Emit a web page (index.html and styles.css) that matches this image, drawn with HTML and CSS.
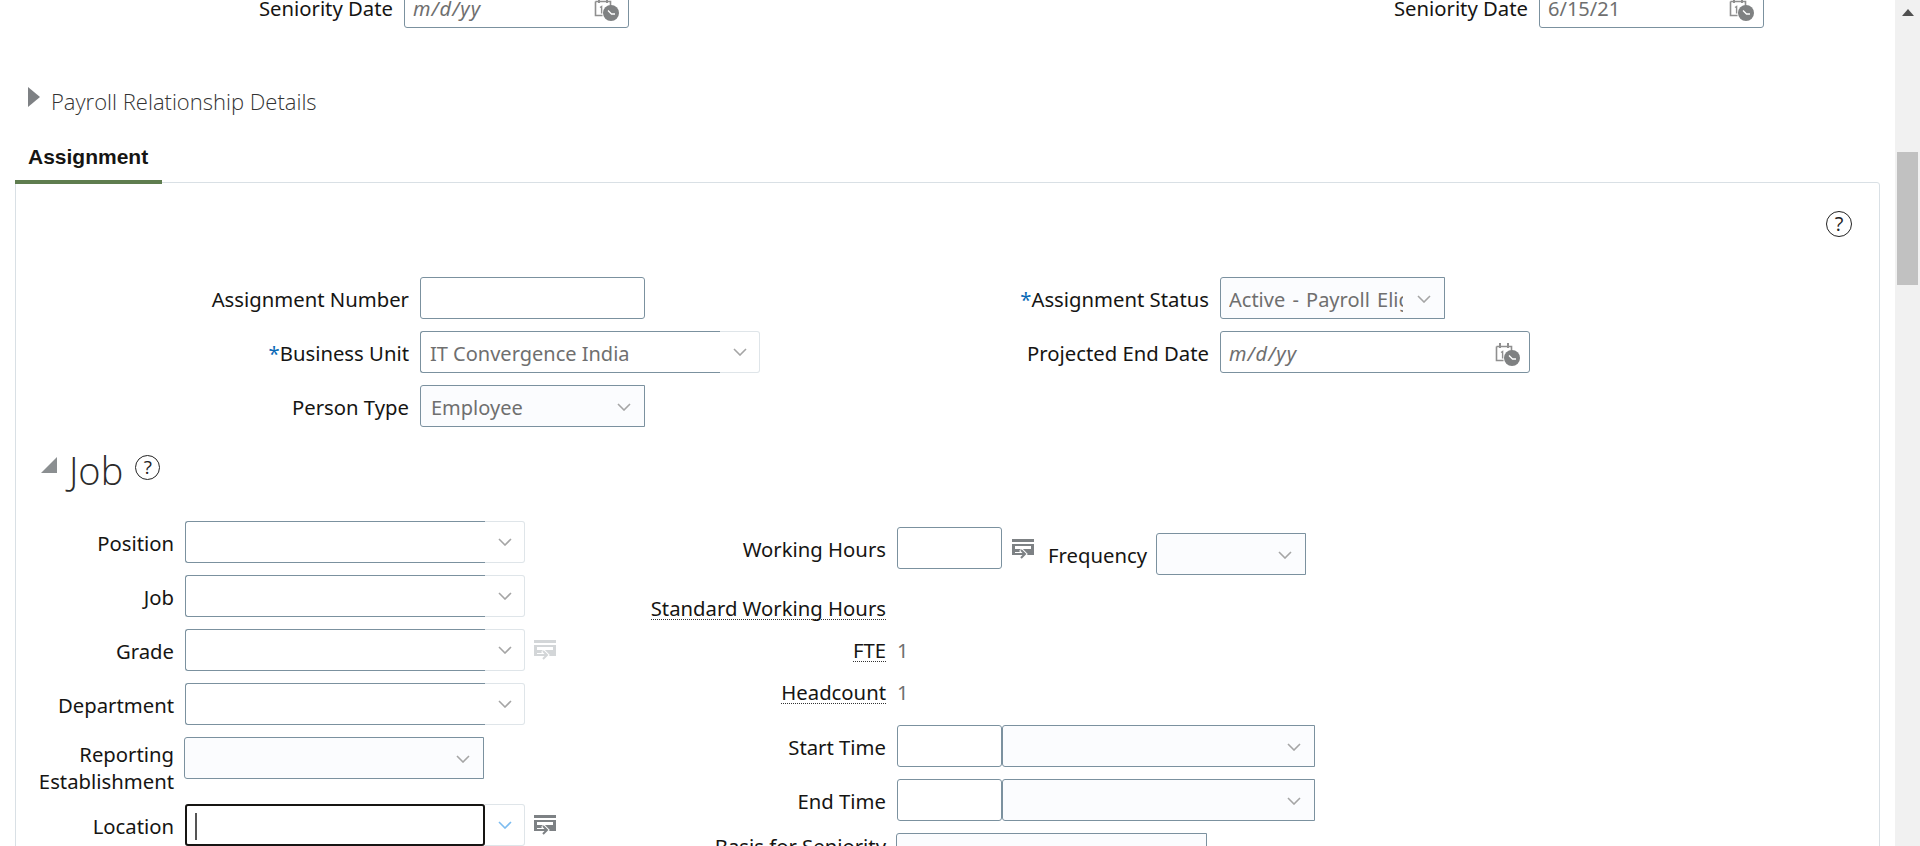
FILE: index.html
```html
<!DOCTYPE html>
<html lang="en">
<head>
<meta charset="utf-8">
<title>Assignment</title>
<link rel="stylesheet" href="styles.css">
</head>
<body>
<svg class="sprite" aria-hidden="true">
  <symbol id="chev" viewBox="0 0 14 8"><polyline points="1,1 7,7 13,1" fill="none" stroke="currentColor" stroke-width="1.6"/></symbol>
  <symbol id="cal" viewBox="0 0 25 24">
    <path d="M1.5 4.5h15v5M1.5 4.5v14h7" fill="none" stroke="#8f8f8f" stroke-width="1.6"/>
    <path d="M5 1v5M13 1v5" stroke="#8f8f8f" stroke-width="2"/>
    <path d="M6 10.5l1.6-1v7" fill="none" stroke="#8f8f8f" stroke-width="1.4"/>
    <circle cx="17" cy="16" r="8" fill="#7f8182"/>
    <path d="M14 13.5l3.5 3.5h3.5" fill="none" stroke="#fff" stroke-width="1.3"/>
  </symbol>
  <symbol id="detail" viewBox="0 0 22 20">
    <path fill-rule="evenodd" d="M0 0h22v3H0zM0 5h22v11H0zM3 7v3h16V7z" fill="currentColor"/>
    <path d="M3 15h10M8.5 10.5l4.5 4.5-4.5 4.5" fill="none" stroke="#fff" stroke-width="4"/>
    <path d="M3 15h10M9 11l4 4-4 4" fill="none" stroke="currentColor" stroke-width="2"/>
  </symbol>
</svg>

<div class="page">
  <main class="content">
    <div class="top-row">
      <span class="label">Seniority Date</span>
      <div class="input date italic"><span>m/d/yy</span><svg class="cal"><use href="#cal"/></svg></div>
      <span class="label">Seniority Date</span>
      <div class="input date"><span>6/15/21</span><svg class="cal"><use href="#cal"/></svg></div>
    </div>

    <div class="disclosure">
      <span class="tri-right"></span>
      <h2 class="disclosure-title">Payroll Relationship Details</h2>
    </div>

    <div class="tabs"><span class="tab">Assignment</span></div>

    <section class="panel">
      <div class="panel-tools"><span class="help">?</span></div>

      <div class="assign-grid">
        <div class="col">
          <div class="field">
            <span class="label lw-a">Assignment Number</span>
            <div class="input w225"></div>
          </div>
          <div class="field">
            <span class="label lw-a"><i class="req">*</i>Business Unit</span>
            <div class="combo"><div class="combo-main"><span>IT Convergence India</span></div><div class="combo-btn"><svg class="chev"><use href="#chev"/></svg></div></div>
          </div>
          <div class="field">
            <span class="label lw-a">Person Type</span>
            <div class="select w225"><span class="val">Employee</span><svg class="chev"><use href="#chev"/></svg></div>
          </div>
        </div>
        <div class="col">
          <div class="field">
            <span class="label lw-b"><i class="req">*</i>Assignment Status</span>
            <div class="select w225"><span class="val clip">Active - Payroll Eligible</span><svg class="chev"><use href="#chev"/></svg></div>
          </div>
          <div class="field">
            <span class="label lw-b">Projected End Date</span>
            <div class="input date italic w310"><span>m/d/yy</span><svg class="cal"><use href="#cal"/></svg></div>
          </div>
        </div>
      </div>

      <div class="job-head">
        <span class="tri-down"></span>
        <h2 class="job-title">Job</h2>
        <span class="help small">?</span>
      </div>

      <div class="job-grid">
        <div class="col">
          <div class="field"><span class="label lw-c">Position</span><div class="combo"><div class="combo-main"></div><div class="combo-btn"><svg class="chev"><use href="#chev"/></svg></div></div></div>
          <div class="field"><span class="label lw-c">Job</span><div class="combo"><div class="combo-main"></div><div class="combo-btn"><svg class="chev"><use href="#chev"/></svg></div></div></div>
          <div class="field"><span class="label lw-c">Grade</span><div class="combo"><div class="combo-main"></div><div class="combo-btn"><svg class="chev"><use href="#chev"/></svg></div></div><svg class="detail faint"><use href="#detail"/></svg></div>
          <div class="field"><span class="label lw-c">Department</span><div class="combo"><div class="combo-main"></div><div class="combo-btn"><svg class="chev"><use href="#chev"/></svg></div></div></div>
          <div class="field tall"><span class="label lw-c wrap">Reporting Establishment</span><div class="select w300"><span class="val"></span><svg class="chev"><use href="#chev"/></svg></div></div>
          <div class="field"><span class="label lw-c">Location</span><div class="combo focus"><div class="combo-main"><span class="caret"></span></div><div class="combo-btn"><svg class="chev blue"><use href="#chev"/></svg></div></div><svg class="detail"><use href="#detail"/></svg></div>
        </div>

        <div class="col">
          <div class="field">
            <span class="label lw-d">Working Hours</span>
            <div class="input w105"></div>
            <svg class="detail hours"><use href="#detail"/></svg>
            <div class="freq">
              <span class="label">Frequency</span>
              <div class="select w150"><span class="val"></span><svg class="chev"><use href="#chev"/></svg></div>
            </div>
          </div>
          <div class="info first"><span class="label lw-d"><span class="dotted">Standard Working Hours</span></span></div>
          <div class="info"><span class="label lw-d"><span class="dotted">FTE</span></span><span class="val">1</span></div>
          <div class="info"><span class="label lw-d"><span class="dotted">Headcount</span></span><span class="val">1</span></div>
          <div class="field after-info">
            <span class="label lw-d">Start Time</span>
            <div class="time"><div class="input w105"></div><div class="select w313"><span class="val"></span><svg class="chev"><use href="#chev"/></svg></div></div>
          </div>
          <div class="field">
            <span class="label lw-d">End Time</span>
            <div class="time"><div class="input w105"></div><div class="select w313"><span class="val"></span><svg class="chev"><use href="#chev"/></svg></div></div>
          </div>
          <div class="field top">
            <span class="label lw-d">Basis for Seniority</span>
            <div class="select w311"><span class="val"></span></div>
          </div>
        </div>
      </div>
    </section>
  </main>
  <aside class="scrollbar">
    <span class="arrow-up"></span>
    <span class="thumb"></span>
  </aside>
</div>
</body>
</html>
```

FILE: styles.css
```css
* { box-sizing: border-box; }
html, body { margin: 0; height: 846px; overflow: hidden; background: #fff; }
body {
  font-family: "Noto Sans", "Open Sans", sans-serif;
  font-size: 20px;
  color: #161513;
}
.sprite { display: none; }
.page { display: flex; height: 846px; overflow: hidden; }
.content { width: 1895px; flex: none; margin-top: -14px; }

/* top fields */
.top-row {
  display: grid;
  grid-template-columns: 393px 225px 888px 225px;
  column-gap: 11px;
  align-items: center;
}
.label { text-align: right; font-size: 20.3px; line-height: 27px; flex: none; white-space: nowrap; padding-top: 2px; }
.req { color: #0a6ab6; font-style: normal; }
.input, .select {
  height: 42px;
  border: 1px solid #7b919f;
  border-radius: 3px;
  flex: none;
  display: flex;
  align-items: center;
  color: #6f6f6f;
  padding-top: 2px;
}
.input { background: #fff; }
.select {
  background: #fbfcfe;
  border-radius: 3px 0 0 3px;
  justify-content: space-between;
  padding: 2px 13px 0 10px;
}
.date { justify-content: space-between; padding: 2px 9px 0 8px; }
.italic { font-style: italic; letter-spacing: 1px; }
.cal { width: 25px; height: 24px; margin-top: 2px; }
.chev { width: 14px; height: 8px; color: #a5a5a5; flex: none; margin-top: -1px; }
.chev.blue { color: #7cbcf0; }
.w105 { width: 105px; }
.w150 { width: 150px; }
.w225 { width: 225px; }
.w300 { width: 300px; margin-left: -1px; }
.w310 { width: 310px; }
.w311 { width: 311px; margin-left: -1px; }
.w313 { width: 313px; }
.val { white-space: nowrap; }
.clip { width: 174px; overflow: hidden; margin-left: -2px; word-spacing: 2px; }

/* disclosure */
.disclosure {
  display: flex;
  align-items: center;
  gap: 11px;
  margin: 52px 0 0 28px;
  height: 42px;
}
.tri-right {
  width: 0; height: 0;
  border-left: 12px solid #7e8184;
  border-top: 10px solid transparent;
  border-bottom: 10px solid transparent;
  margin-top: -8px;
}
.disclosure-title {
  margin: 0;
  font-family: "Open Sans", sans-serif;
  font-weight: 300;
  font-size: 22px;
  color: #333;
}

/* tabs */
.tabs { margin: 20px 0 0 15px; height: 42px; display: flex; }
.tab {
  width: 147px;
  height: 42px;
  padding-left: 13px;
  line-height: 30px;
  font-family: "Liberation Sans", Arial, sans-serif;
  font-weight: 700;
  font-size: 21px;
  color: #161513;
  border-bottom: 4px solid #5f7d4f;
  position: relative;
  z-index: 1;
}

/* panel */
.panel {
  margin: -2px 0 0 15px;
  width: 1865px;
  height: 800px;
  border: 1px solid #d9e0e5;
  border-radius: 0 3px 0 0;
}
.panel-tools { display: flex; justify-content: flex-end; padding: 28px 27px 0 0; height: 94px; }
.help {
  width: 26px; height: 26px;
  border: 1.6px solid #222;
  border-radius: 50%;
  display: flex;
  align-items: center;
  justify-content: center;
  font-family: "Open Sans", sans-serif;
  font-weight: 400;
  font-size: 20px;
  line-height: 1;
  color: #222;
}
.col { display: flex; flex-direction: column; gap: 12px; }
.field { display: flex; gap: 11px; align-items: center; height: 42px; }
.field.top { align-items: flex-start; }
.field.top .label { padding-top: 0; }
.assign-grid { display: grid; grid-template-columns: 783px 1fr; }
.lw-a { width: 393px; }
.lw-b { width: 410px; }
.lw-c { width: 158px; }
.lw-d { width: 250px; }
.label.wrap { white-space: normal; padding-top: 4px; }
.tall { height: 55px; align-items: flex-start; }
.combo { display: flex; width: 340px; height: 42px; flex: none; color: #6f6f6f; }
.combo-main {
  width: 300px;
  border: 1px solid #7b919f;
  border-right: 0;
  border-radius: 3px 0 0 3px;
  display: flex;
  align-items: center;
  padding: 2px 0 0 9px;
}
.combo-btn {
  width: 40px;
  border: 1px solid #dfe5e9;
  border-left: 0;
  border-radius: 0 3px 3px 0;
  display: flex;
  align-items: center;
  justify-content: center;
}
.focus .combo-main { border: 2.5px solid #161513; border-radius: 3px; position: relative; }
.caret { width: 2px; height: 27px; background: #555; margin-left: -1px; }
.detail { width: 22px; height: 20px; color: #7d8184; flex: none; margin-left: -2px; }
.detail.faint { color: #d3d6d8; }
.detail.hours { margin-left: -1px; margin-top: 2px; }

/* job */
.job-head { display: flex; align-items: center; margin: 14px 0 0 25px; height: 58px; }
.tri-down {
  width: 0; height: 0;
  border-left: 16px solid transparent;
  border-bottom: 16px solid #8b8f91;
  margin-right: 12px;
  margin-top: -10px;
}
.job-title {
  margin: 0;
  font-family: "Open Sans", sans-serif;
  font-weight: 300;
  font-size: 38px;
  color: #2b2b2b;
}
.help.small { width: 25px; height: 25px; margin: -6px 0 0 12px; font-size: 19px; }
.job-grid { display: grid; grid-template-columns: 620px 1fr; margin-top: 22px; }
.job-grid > .col:last-child { padding-top: 6px; }
.freq { display: flex; align-items: center; gap: 9px; margin: 12px 0 0 3px; }
.info { display: flex; gap: 11px; align-items: flex-start; height: 30px; }
.info.first { margin-top: 14px; }
.info .label { padding-top: 0; }
.after-info { margin-top: 4px; }
.dotted { display: inline-block; border-bottom: 1px dotted #333; line-height: 26px; height: 25px; }
.info .val { line-height: 28px; color: #6f6f6f; }
.time { display: flex; }
.time .input { border-radius: 3px; }

/* scrollbar */
.scrollbar { width: 25px; flex: none; background: #f1f1f1; display: flex; flex-direction: column; align-items: center; padding-top: 9px; }
.arrow-up { width: 0; height: 0; border-left: 6px solid transparent; border-right: 6px solid transparent; border-bottom: 7px solid #505050; }
.thumb { width: 21px; height: 133px; background: #c1c1c1; margin-top: 136px; }
```
